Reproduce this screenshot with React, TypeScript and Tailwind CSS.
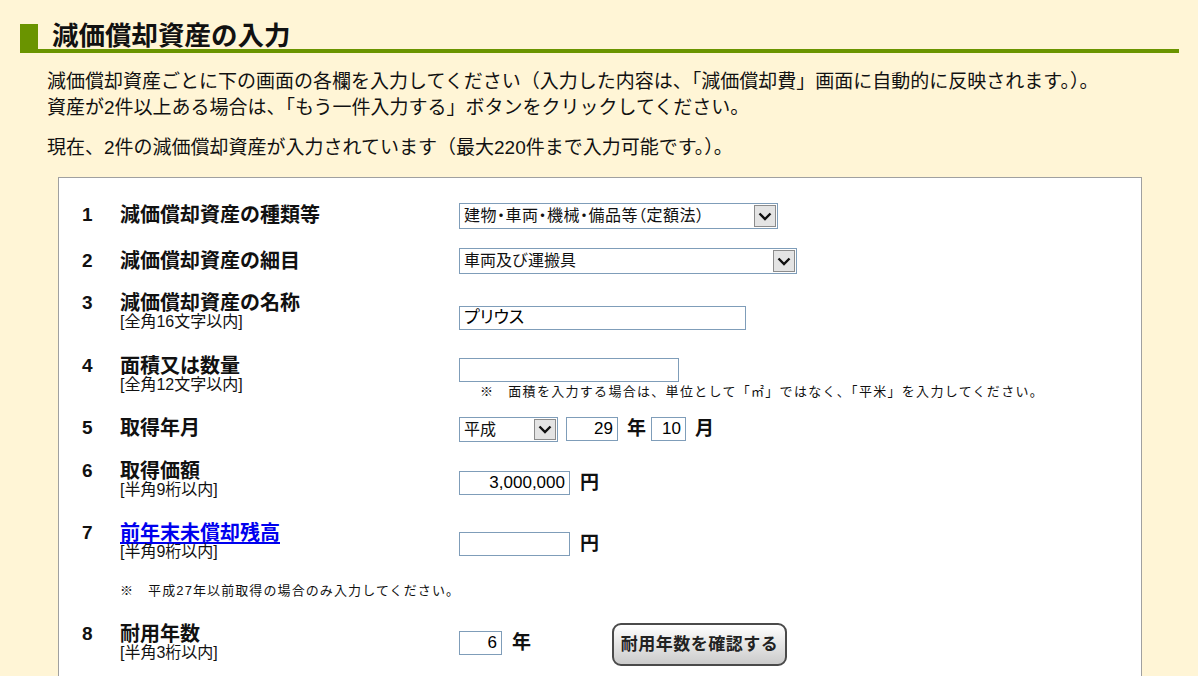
import React from 'react';

const jp = "font-['Liberation_Sans','Noto_Sans_CJK_JP',sans-serif]";

function Chevron() {
  return (
    <svg viewBox="0 0 14 9" className="h-[9px] w-[14px]">
      <path d="M1.5 1.5 7 7l5.5-5.5" fill="none" stroke="#111" strokeWidth="2.4" />
    </svg>
  );
}

function FakeSelect({ className, children }: { className: string; children: React.ReactNode }) {
  return (
    <div className={'flex items-stretch border border-[#7f9db9] bg-white ' + className}>
      <span className="flex flex-1 items-center truncate pl-[4px] text-[16px] leading-none">{children}</span>
      <span className="m-[1px] flex w-[22px] items-center justify-center border border-[#8c8c8c] bg-[#e4e4e4]">
        <Chevron />
      </span>
    </div>
  );
}

function TextBox({ className, value = '', right = false }: { className: string; value?: string; right?: boolean }) {
  return (
    <input
      readOnly
      value={value}
      className={
        'h-[24px] border border-[#7f9db9] bg-white px-[4px] text-[17px] text-black outline-none ' +
        (right ? 'text-right ' : '') +
        className
      }
    />
  );
}

function Label({ num, title, sub, link = false }: { num: string; title: string; sub?: string; link?: boolean }) {
  return (
    <>
      <div className="text-[19px] font-bold leading-[22px] text-[#111]">{num}</div>
      <div>
        <div
          className={
            'text-[20px] font-bold leading-[22px] ' +
            (link ? 'text-[#0000ee] underline underline-offset-2' : 'text-[#111]')
          }
        >
          {title}
        </div>
        {sub && <div className="text-[16px] leading-[16px] text-[#111]">{sub}</div>}
      </div>
    </>
  );
}

const Unit = ({ children, className = '' }: { children: React.ReactNode; className?: string }) => (
  <span className={'text-[19px] font-bold leading-[24px] text-[#111] ' + className}>{children}</span>
);

export default function App() {
  return (
    <div className={'h-[676px] w-full overflow-hidden bg-[#fff5d6] text-[#111] ' + jp}>
      {/* heading */}
      <div className="ml-[20px] mt-[24px] h-[29px] w-[1159px] border-b-4 border-l-[18px] border-[#6a9400] pl-[14px]">
        <h1 className="text-[26.5px] font-bold leading-[25px] text-[#111]">減価償却資産の入力</h1>
      </div>

      <div className="ml-[47px] mt-[16px] text-[19px] leading-[26px]">
        <p>減価償却資産ごとに下の画面の各欄を入力してください（入力した内容は、「減価償却費」画面に自動的に反映されます。）。</p>
        <p>資産が2件以上ある場合は、「もう一件入力する」ボタンをクリックしてください。</p>
        <p className="mt-[14px]">現在、2件の減価償却資産が入力されています（最大220件まで入力可能です。）。</p>
      </div>

      {/* form panel */}
      <div className="ml-[58px] mt-[16px] w-[1084px] border border-[#a0a0a0] bg-white pl-[23px] pt-[26px] pb-[40px]">
        <div className="grid h-[46px] grid-cols-[38px_339px_1fr]">
          <Label num="1" title="減価償却資産の種類等" />
          <div className="-mt-[1px]">
            <FakeSelect className="h-[26px] w-[319px]">
              <span className="tracking-[0.5px] [font-feature-settings:'palt']">建物・車両・機械・備品等（定額法）</span>
            </FakeSelect>
          </div>
        </div>

        <div className="grid h-[42px] grid-cols-[38px_339px_1fr]">
          <Label num="2" title="減価償却資産の細目" />
          <div className="-mt-[2px]">
            <FakeSelect className="h-[26px] w-[338px]">車両及び運搬具</FakeSelect>
          </div>
        </div>

        <div className="grid h-[63px] grid-cols-[38px_339px_1fr]">
          <Label num="3" title="減価償却資産の名称" sub="[全角16文字以内]" />
          <div className="mt-[14px]">
            <TextBox className="w-[287px] [font-feature-settings:'palt']" value="プリウス" />
          </div>
        </div>

        <div className="grid h-[62px] grid-cols-[38px_339px_1fr]">
          <Label num="4" title="面積又は数量" sub="[全角12文字以内]" />
          <div className="mt-[3px]">
            <TextBox className="w-[220px]" />
            <p className="mt-[2px] pl-[21px] text-[13px] leading-[16px] tracking-[1.3px]">
              ※<span className="ml-[14px]">面積を入力する場合は、単位として「㎡」ではなく、「平米」を入力してください。</span>
            </p>
          </div>
        </div>

        <div className="grid h-[43px] grid-cols-[38px_339px_1fr]">
          <Label num="5" title="取得年月" />
          <div className="flex items-start">
            <FakeSelect className="h-[25px] w-[99px]">平成</FakeSelect>
            <TextBox className="ml-[8px] w-[52px]" value="29" right />
            <Unit className="ml-[9px]">年</Unit>
            <TextBox className="ml-[5px] w-[35px]" value="10" right />
            <Unit className="ml-[9px]">月</Unit>
          </div>
        </div>

        <div className="grid h-[62px] grid-cols-[38px_339px_1fr]">
          <Label num="6" title="取得価額" sub="[半角9桁以内]" />
          <div className="mt-[11px] flex items-start">
            <TextBox className="w-[111px]" value="3,000,000" right />
            <Unit className="ml-[10px]">円</Unit>
          </div>
        </div>

        <div className="grid h-[61px] grid-cols-[38px_339px_1fr]">
          <Label num="7" title="前年末未償却残高" sub="[半角9桁以内]" link />
          <div className="mt-[10px] flex items-start">
            <TextBox className="w-[111px]" />
            <Unit className="ml-[10px]">円</Unit>
          </div>
        </div>

        <div className="h-[40px] pl-[38px] text-[13px] leading-[16px] tracking-[1.1px]">
          ※<span className="ml-[14px]">平成27年以前取得の場合のみ入力してください。</span>
        </div>

        <div className="grid h-[70px] grid-cols-[38px_339px_1fr]">
          <Label num="8" title="耐用年数" sub="[半角3桁以内]" />
          <div className="flex items-start">
            <div className="mt-[8px] flex w-[153px] items-start">
              <TextBox className="w-[43px]" value="6" right />
              <Unit className="ml-[10px]">年</Unit>
            </div>
            <button className="h-[43px] w-[175px] rounded-[9px] border-2 border-[#4a4a4a] bg-gradient-to-b from-white to-[#cbcbcb] text-[17px] font-bold tracking-[0.5px] text-[#222]">
              耐用年数を確認する
            </button>
          </div>
        </div>
      </div>
    </div>
  );
}
